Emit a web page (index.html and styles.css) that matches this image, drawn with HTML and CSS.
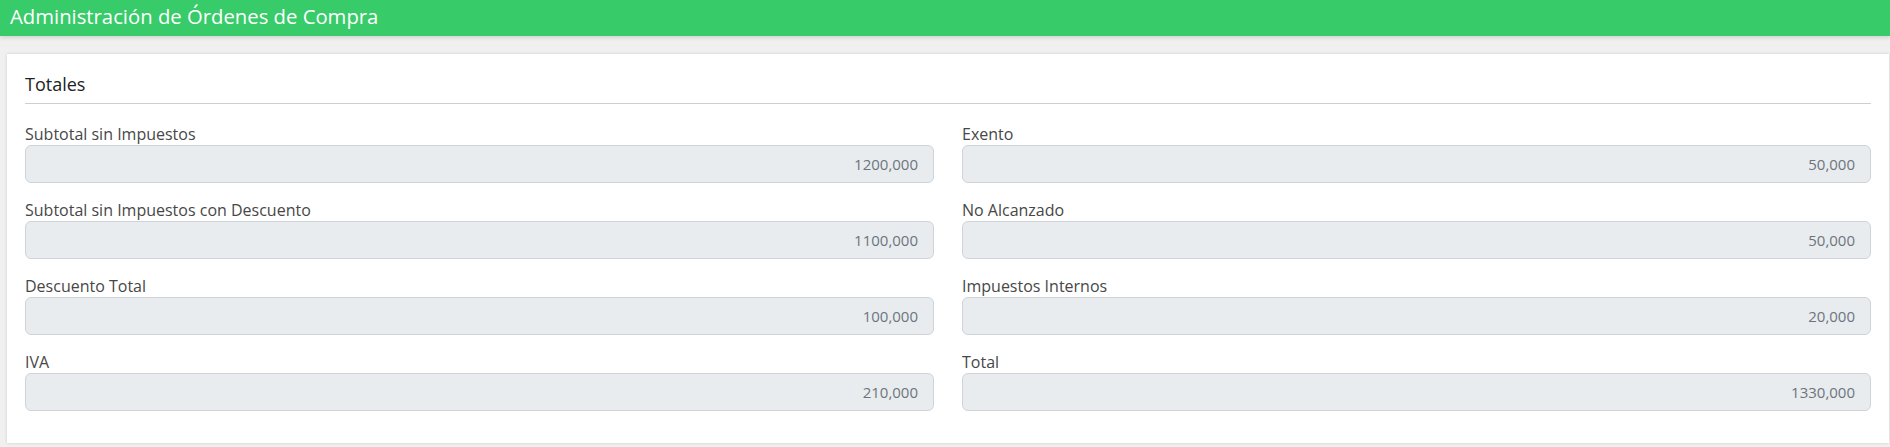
FILE: index.html
```html
<!DOCTYPE html>
<html lang="es">
<head>
<meta charset="utf-8">
<title>Administración de Órdenes de Compra</title>
<link rel="stylesheet" href="styles.css">
</head>
<body>
<header class="topbar">Administración de Órdenes de Compra</header>
<main class="page">
  <section class="card">
    <h2 class="card-title">Totales</h2>
    <div class="grid">
      <div class="field"><label>Subtotal sin Impuestos</label><div class="input">1200,000</div></div>
      <div class="field"><label>Exento</label><div class="input">50,000</div></div>
      <div class="field"><label>Subtotal sin Impuestos con Descuento</label><div class="input">1100,000</div></div>
      <div class="field"><label>No Alcanzado</label><div class="input">50,000</div></div>
      <div class="field"><label>Descuento Total</label><div class="input">100,000</div></div>
      <div class="field"><label>Impuestos Internos</label><div class="input">20,000</div></div>
      <div class="field"><label>IVA</label><div class="input">210,000</div></div>
      <div class="field"><label>Total</label><div class="input">1330,000</div></div>
    </div>
  </section>
</main>
</body>
</html>
```
FILE: styles.css
```css
html, body {
  margin: 0;
  padding: 0;
  background: #f0f0f0;
  font-family: "Open Sans", "Noto Sans", sans-serif;
}
.topbar {
  height: 36px;
  line-height: 33px;
  padding-left: 10px;
  background: #37cb69;
  color: #ffffff;
  font-size: 20.3px;
  font-weight: 400;
  box-shadow: 0 2px 4px rgba(0, 0, 0, 0.12);
  position: relative;
}
.page {
  padding: 18px 1px 3px 7px;
}
.card {
  background: #ffffff;
  padding: 19px 18px 15px 18px;
  box-shadow: 0 0 3px rgba(0, 0, 0, 0.15);
}
.card-title {
  margin: 0 0 20px 0;
  padding-bottom: 8px;
  border-bottom: 1px solid #cfcfcf;
  font-size: 18px;
  line-height: 22px;
  font-weight: 500;
  color: #222222;
}
.grid {
  display: grid;
  grid-template-columns: 1fr 1fr;
  column-gap: 28px;
}
.field {
  margin-bottom: 17px;
}
.field label {
  display: block;
  font-size: 16px;
  line-height: 20px;
  font-weight: 400;
  color: #474747;
  margin-bottom: 1px;
}
.input {
  box-sizing: border-box;
  height: 38px;
  line-height: 36px;
  padding: 0 15px;
  text-align: right;
  background: #e9ecef;
  border: 1px solid #ced4da;
  border-radius: 6px;
  font-size: 15px;
  color: #6c757d;
}
```
